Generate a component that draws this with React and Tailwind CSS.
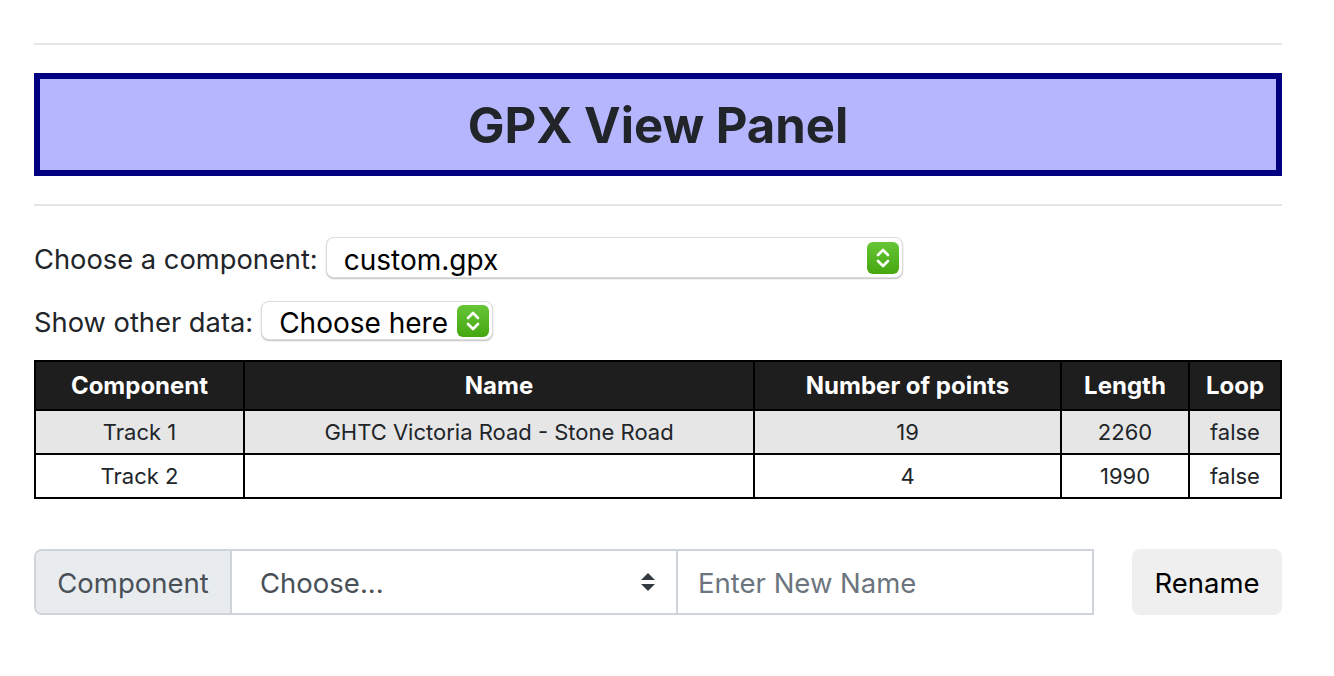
import React from "react";

const Stepper = ({ size = 32 }) => (
  <span
    className="flex items-center justify-center rounded-[6px] bg-gradient-to-b from-[#66c636] to-[#45a70c]"
    style={{ width: size, height: size }}
  >
    <svg width="16" height="22" viewBox="0 0 16 22" fill="none" stroke="white" strokeWidth="2.6" strokeLinecap="round" strokeLinejoin="round">
      <polyline points="3,8 8,3 13,8" />
      <polyline points="3,14 8,19 13,14" />
    </svg>
  </span>
);

const MacSelect = ({ value, className }) => (
  <div
    className={
      "flex items-center justify-between bg-white border border-[#dcdcdc] rounded-[8px] shadow-[0_1px_1.5px_rgba(0,0,0,0.25)] pl-[17px] pr-[3px] text-black text-[28px] leading-none " +
      className
    }
  >
    <span className="pt-[4px]">{value}</span>
    <Stepper />
  </div>
);

const rows = [
  { comp: "Track 1", name: "GHTC Victoria Road - Stone Road", pts: 19, len: 2260, loop: "false" },
  { comp: "Track 2", name: "", pts: 4, len: 1990, loop: "false" },
];

export default function App() {
  return (
    <div className="min-h-screen bg-white font-['Inter',sans-serif] text-[#212529]">
      <div className="w-[1248px] ml-[34px] pt-[43px]">
        <hr className="border-0 border-t-2 border-[#e5e5e5]" />

        {/* Header */}
        <div className="mt-[28px] h-[103px] border-[6px] border-[#000080] bg-[#b5b6fe] flex items-center justify-center">
          <h1 className="text-[49px] font-bold text-[#212529] pt-[3px]">GPX View Panel</h1>
        </div>

        <hr className="mt-[28px] border-0 border-t-2 border-[#e5e5e5]" />

        {/* Selectors */}
        <div className="mt-[31px] h-[41px] flex items-center gap-[8px] text-[27.3px] leading-none">
          <label className="pt-[4px]">Choose a component:</label>
          <MacSelect value="custom.gpx" className="w-[577px] h-[41px]" />
        </div>
        <div className="mt-[23px] h-[39px] flex items-center gap-[8px] text-[27.3px] leading-none">
          <label className="pt-[4px]">Show other data:</label>
          <MacSelect value="Choose here" className="w-[232px] h-[39px]" />
        </div>

        {/* Table */}
        <table className="mt-[20px] w-full border-collapse border-2 border-black text-[22px] text-center">
          <thead>
            <tr className="bg-[#1e1e1e] text-white h-[49px]">
              <th className="w-[209px] border-2 border-black font-bold text-[24px]">Component</th>
              <th className="w-[510px] border-2 border-black font-bold text-[24px]">Name</th>
              <th className="w-[307px] border-2 border-black font-bold text-[24px]">Number of points</th>
              <th className="w-[128px] border-2 border-black font-bold text-[24px]">Length</th>
              <th className="border-2 border-black font-bold text-[24px]">Loop</th>
            </tr>
          </thead>
          <tbody>
            {rows.map((r, i) => (
              <tr key={r.comp} className={(i === 0 ? "bg-[#e6e6e6]" : "bg-white") + " h-[44px]"}>
                <td className="border-2 border-black">{r.comp}</td>
                <td className="border-2 border-black">{r.name}</td>
                <td className="border-2 border-black">{r.pts}</td>
                <td className="border-2 border-black">{r.len}</td>
                <td className="border-2 border-black">{r.loop}</td>
              </tr>
            ))}
          </tbody>
        </table>

        {/* Rename */}
        <div className="mt-[50px] flex items-center justify-between text-[27.5px]">
          <div className="flex h-[66px] w-[1060px] border-2 border-[#ced4da] rounded-l-[8px] overflow-hidden">
            <div className="w-[194px] flex items-center justify-center bg-[#e9ecef] text-[#495057] pt-[3px]">Component</div>
            <div className="w-[446px] flex items-center justify-between border-l-2 border-[#ced4da] pl-[28px] pr-[20px] text-[#495057]">
              <span className="pt-[3px]">Choose...</span>
              <svg width="16" height="22" viewBox="0 0 16 22" fill="#343a40">
                <polygon points="1,9 8,2 15,9" />
                <polygon points="1,13 8,20 15,13" />
              </svg>
            </div>
            <div className="flex-1 flex items-center border-l-2 border-[#ced4da] pl-[20px] text-[#6c757d] pt-[3px]">
              Enter New Name
            </div>
          </div>
          <button className="w-[150px] h-[66px] rounded-[8px] bg-[#efefef] text-black pt-[3px]">Rename</button>
        </div>
      </div>
    </div>
  );
}
